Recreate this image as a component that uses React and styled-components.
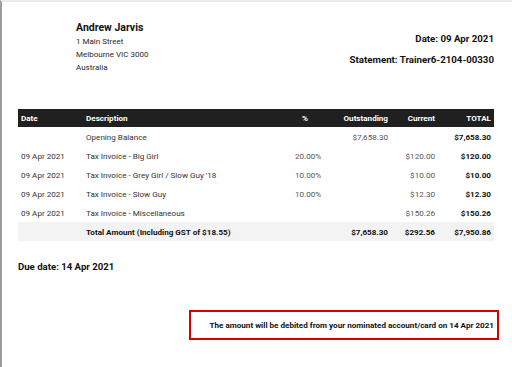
import React from "react"
import styled, { createGlobalStyle } from "styled-components"

const GlobalStyle = createGlobalStyle`
  html, body {
    margin: 0;
    padding: 0;
    background: #fff;
  }
  body {
    font-family: Roboto, "Liberation Sans", Arial, sans-serif;
    color: #222;
  }
`

const Page = styled.div`
  box-sizing: border-box;
  min-height: 367px;
  border-left: 2px solid #9c9c9c;
  border-top: 2px solid #ececec;
  padding: 19px 13px 0 16px;
  display: flex;
  flex-direction: column;
`

const Header = styled.div`
  display: flex;
  justify-content: space-between;
  align-items: flex-start;
  margin-right: 5px;
`

const Address = styled.div`
  margin-left: 58px;
  display: flex;
  flex-direction: column;
`

const Name = styled.div`
  font-size: 10.5px;
  font-weight: 700;
  line-height: 14px;
  color: #111;
`

const AddressLine = styled.div`
  font-size: 8px;
  line-height: 13px;
  color: #2a2a2a;
`

const Meta = styled.div`
  display: flex;
  flex-direction: column;
  align-items: flex-end;
  gap: 7px;
  padding-top: 11px;
`

const MetaLine = styled.div`
  font-size: 9.7px;
  font-weight: 700;
  line-height: 14px;
  color: #111;
`

const Table = styled.table`
  width: calc(100% - 5px);
  margin-top: 35px;
  border-collapse: collapse;
  table-layout: fixed;
  font-size: 8.1px;
`

const Th = styled.th`
  background: #202020;
  color: #fff;
  font-weight: 700;
  height: 18px;
  padding: 0 3px;
  text-align: ${(p) => p.$align || "left"};
  ${(p) => p.$indent && `padding-left: ${p.$indent}px;`}
`

const Row = styled.tr`
  background: ${(p) => (p.$total ? "#f3f3f3" : "transparent")};
`

const Td = styled.td`
  height: 19px;
  padding: 0 3px;
  white-space: nowrap;
  text-align: ${(p) => p.$align || "left"};
  font-weight: ${(p) => (p.$bold ? 700 : 400)};
  color: ${(p) => (p.$bold ? "#111" : p.$muted ? "#555" : "#333")};
`

const DueDate = styled.div`
  margin-top: 19px;
  font-size: 9.6px;
  font-weight: 700;
  line-height: 14px;
  color: #111;
`

const Notice = styled.div`
  box-sizing: border-box;
  margin-top: 36px;
  margin-left: auto;
  width: 310px;
  height: 30px;
  border: 2px solid #d60000;
  display: flex;
  align-items: center;
  justify-content: flex-end;
  padding-right: 3px;
  font-size: 8.1px;
  font-weight: 700;
  color: #111;
  white-space: nowrap;
`

const rows = [
  { date: "", desc: "Opening Balance", pct: "", out: "$7,658.30", cur: "", total: "$7,658.30" },
  { date: "09 Apr 2021", desc: "Tax Invoice - Big Girl", pct: "20.00%", out: "", cur: "$120.00", total: "$120.00" },
  { date: "09 Apr 2021", desc: "Tax Invoice - Grey Girl / Slow Guy '18", pct: "10.00%", out: "", cur: "$10.00", total: "$10.00" },
  { date: "09 Apr 2021", desc: "Tax Invoice - Slow Guy", pct: "10.00%", out: "", cur: "$12.30", total: "$12.30" },
  { date: "09 Apr 2021", desc: "Tax Invoice - Miscellaneous", pct: "", out: "", cur: "$150.26", total: "$150.26" },
]

const App = () => (
  <>
    <GlobalStyle />
    <Page>
      <Header>
        <Address>
          <Name>Andrew Jarvis</Name>
          <AddressLine>1 Main Street</AddressLine>
          <AddressLine>Melbourne VIC 3000</AddressLine>
          <AddressLine>Australia</AddressLine>
        </Address>
        <Meta>
          <MetaLine>Date: 09 Apr 2021</MetaLine>
          <MetaLine>Statement: Trainer6-2104-00330</MetaLine>
        </Meta>
      </Header>

      <Table>
        <colgroup>
          <col style={{ width: 65 }} />
          <col style={{ width: 209 }} />
          <col style={{ width: 43 }} />
          <col style={{ width: 56 }} />
          <col style={{ width: 47 }} />
          <col style={{ width: 56 }} />
        </colgroup>
        <thead>
          <tr>
            <Th>Date</Th>
            <Th>Description</Th>
            <Th $indent={10}>%</Th>
            <Th $align="right">Outstanding</Th>
            <Th $align="right">Current</Th>
            <Th $align="right">TOTAL</Th>
          </tr>
        </thead>
        <tbody>
          {rows.map((r, i) => (
            <Row key={i}>
              <Td>{r.date}</Td>
              <Td>{r.desc}</Td>
              <Td $muted>{r.pct}</Td>
              <Td $align="right" $muted>{r.out}</Td>
              <Td $align="right" $muted>{r.cur}</Td>
              <Td $align="right" $bold>{r.total}</Td>
            </Row>
          ))}
          <Row $total>
            <Td />
            <Td $bold>Total Amount (Including GST of $18.55)</Td>
            <Td />
            <Td $align="right" $bold>$7,658.30</Td>
            <Td $align="right" $bold>$292.56</Td>
            <Td $align="right" $bold>$7,950.86</Td>
          </Row>
        </tbody>
      </Table>

      <DueDate>Due date: 14 Apr 2021</DueDate>

      <Notice>The amount will be debited from your nominated account/card on 14 Apr 2021</Notice>
    </Page>
  </>
)

export default App
